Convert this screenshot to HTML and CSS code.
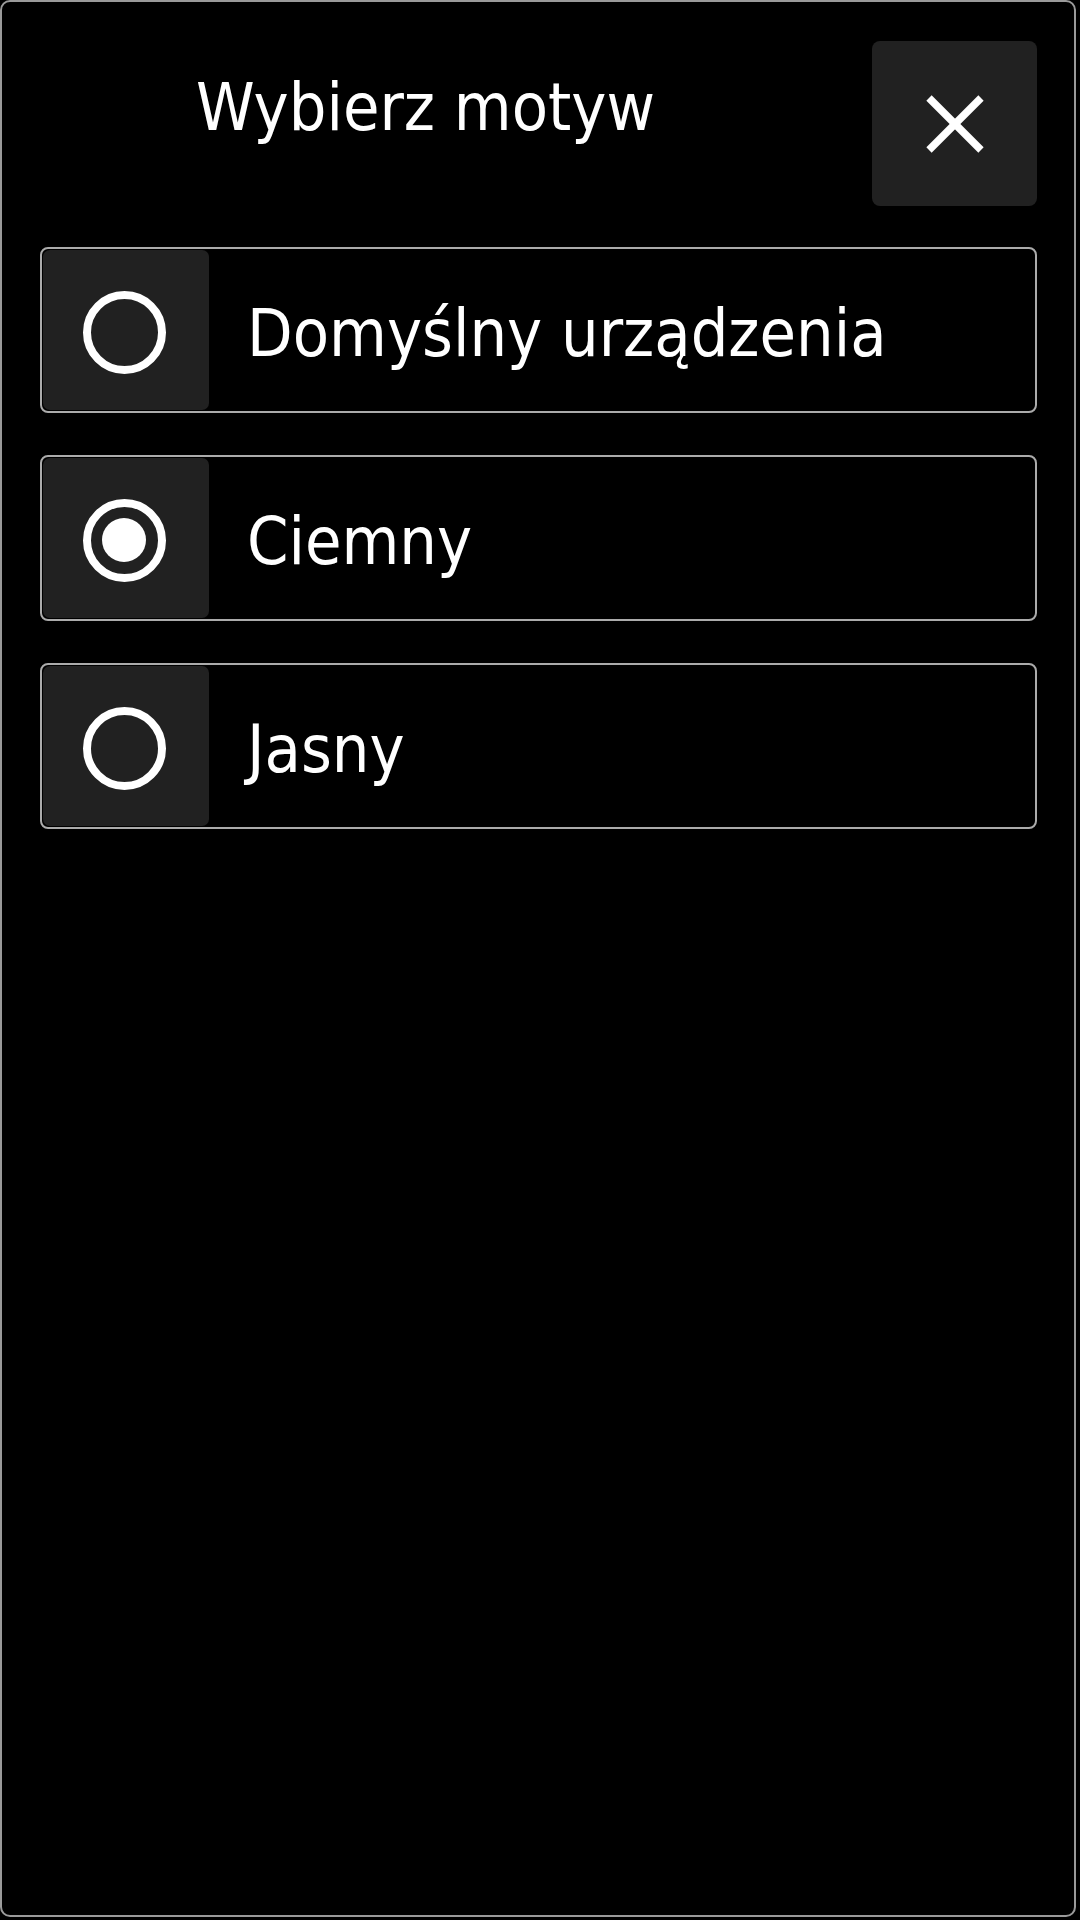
FILE: index.html
```html
<!DOCTYPE html>
<html lang="pl">
<head>
  <meta charset="UTF-8" />
  <meta name="viewport" content="width=device-width, initial-scale=1.0" />
  <title>Wybierz motyw</title>
  <link rel="stylesheet" href="styles.css">
</head>
<body>
  <div class="dialog">
    <div class="header">
      <div class="title">Wybierz motyw</div>
      <button class="close" aria-label="Zamknij">
        <svg width="58" height="58" viewBox="0 0 58 58">
          <line x1="3" y1="3" x2="55" y2="55" />
          <line x1="55" y1="3" x2="3" y2="55" />
        </svg>
      </button>
    </div>
    <div class="options">
      <div class="option">
        <div class="radio-box"><span class="radio"></span></div>
        <div class="label">Domyślny urządzenia</div>
      </div>
      <div class="option">
        <div class="radio-box"><span class="radio checked"></span></div>
        <div class="label">Ciemny</div>
      </div>
      <div class="option">
        <div class="radio-box"><span class="radio"></span></div>
        <div class="label">Jasny</div>
      </div>
    </div>
  </div>
</body>
</html>
```

FILE: styles.css
```css
* { box-sizing: border-box; }
html, body {
  margin: 0;
  padding: 0;
  background: #000;
  font-family: "DejaVu Sans Condensed", "DejaVu Sans", sans-serif;
  font-stretch: condensed;
  color: #fff;
}
.dialog {
  width: 1076px;
  height: 1917px;
  border: 2px solid #9a9a9a;
  border-radius: 10px;
  background: #000;
  padding: 39px 37px 0 38px;
}
.header {
  display: flex;
  align-items: flex-start;
}
.title {
  flex: 1;
  font-size: 66px;
  line-height: 66px;
  margin-top: 34px;
  padding-left: 156px;
}
.close {
  width: 165px;
  height: 165px;
  border: none;
  border-radius: 8px;
  background: #212121;
  padding: 0;
  display: flex;
  align-items: center;
  justify-content: center;
}
.close svg line {
  stroke: #fff;
  stroke-width: 7.5;
}
.options {
  display: flex;
  flex-direction: column;
  gap: 42px;
  margin-top: 41px;
}
.option {
  height: 166px;
  border: 2px solid #ababab;
  border-radius: 8px;
  padding: 1px;
  display: flex;
  align-items: center;
}
.radio-box {
  width: 166px;
  height: 100%;
  background: #212121;
  border-radius: 7px;
  padding: 4px 4px 0 0;
  display: flex;
  align-items: center;
  justify-content: center;
}
.radio {
  width: 83px;
  height: 83px;
  border: 8px solid #fff;
  border-radius: 50%;
  display: flex;
  align-items: center;
  justify-content: center;
}
.radio.checked::after {
  content: "";
  width: 44px;
  height: 44px;
  border-radius: 50%;
  background: #fff;
}
.label {
  margin-left: 38px;
  margin-top: 8px;
  font-size: 66px;
  line-height: 66px;
}
```
